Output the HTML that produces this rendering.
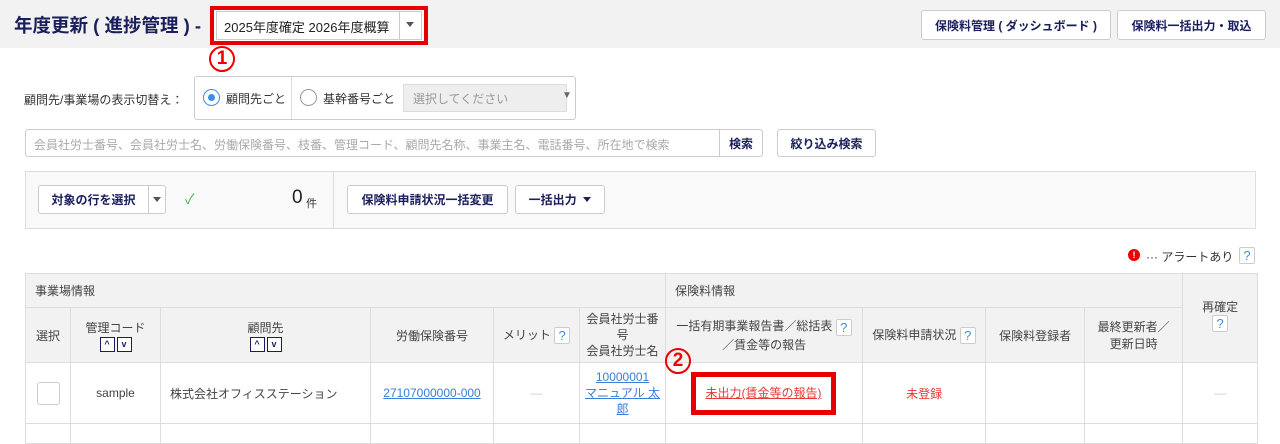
<!DOCTYPE html>
<html><head><meta charset="utf-8"><style>
*{box-sizing:border-box;margin:0;padding:0}
body{width:1280px;height:430px;overflow:hidden;background:#fff;font-family:"Liberation Sans","Noto Sans CJK JP",sans-serif;color:#333;position:relative;font-size:12px}
.a{position:absolute}
.btn{position:absolute;border:1px solid #ccc;border-radius:3px;background:#fff;color:#1a1f5c;font-weight:bold;font-size:12px;display:flex;align-items:center;justify-content:center}
.q{display:inline-block;width:16px;height:17px;border:1px solid #ccc;border-radius:2px;color:#3a8ee6;font-size:13px;line-height:15px;text-align:center;background:#fff;vertical-align:middle}
table{position:absolute;left:25px;top:273px;border-collapse:collapse;width:1232px;font-size:12px;table-layout:fixed}
td,th{border:1px solid #ddd;font-weight:normal;text-align:center;color:#444}
th{background:#f2f2f2}
.sort{display:inline-block;width:15px;height:15px;border:1px solid #1a1f5c;margin:0 1px;font-size:9px;line-height:13px;color:#1a1f5c;font-weight:bold;background:#fff}
.lnk{color:#3a7ed8;text-decoration:underline}
.circ{position:absolute;width:26px;height:26px;border:2px solid #e00;border-radius:50%;color:#e00;font-weight:bold;font-size:19px;text-align:center;line-height:22px}
</style></head><body>
<div class="a" style="left:0;top:0;width:1280px;height:48px;background:#f2f2f2"></div>
<div class="a" style="left:14px;top:12px;font-size:18.5px;font-weight:bold;color:#1a1f5c">年度更新 ( 進捗管理 ) -</div>
<div class="a" style="left:210px;top:6px;width:218px;height:39px;border:4px solid #e60000;background:#fff"></div>
<div class="a" style="left:216px;top:11px;width:206px;height:29px;border:1px solid #ccc;background:#fff"></div>
<div class="a" style="left:224px;top:17px;font-size:13px;color:#222">2025年度確定 2026年度概算</div>
<div class="a" style="left:399px;top:12px;width:1px;height:27px;background:#ccc"></div>
<div class="a" style="left:406px;top:22px;border-left:4px solid transparent;border-right:4px solid transparent;border-top:5px solid #555"></div>
<div class="btn" style="left:921px;top:10px;width:190px;height:30px">保険料管理 ( ダッシュボード )</div>
<div class="btn" style="left:1117px;top:10px;width:149px;height:30px">保険料一括出力・取込</div>
<div class="circ" style="left:209px;top:46px">1</div>

<div class="a" style="left:24px;top:91px;font-size:12px;color:#333">顧問先/事業場の表示切替え：</div>
<div class="a" style="left:194px;top:76px;width:382px;height:44px;border:1px solid #ccc;border-radius:3px"></div>
<div class="a" style="left:291px;top:77px;width:1px;height:42px;background:#ddd"></div>
<div class="a" style="left:203px;top:89px;width:17px;height:17px;border:1px solid #3a8ee6;border-radius:50%"></div>
<div class="a" style="left:208px;top:94px;width:7px;height:7px;background:#3a8ee6;border-radius:50%"></div>
<div class="a" style="left:226px;top:90px;font-size:12px">顧問先ごと</div>
<div class="a" style="left:300px;top:89px;width:17px;height:17px;border:1px solid #999;border-radius:50%"></div>
<div class="a" style="left:323px;top:90px;font-size:12px">基幹番号ごと</div>
<div class="a" style="left:403px;top:84px;width:164px;height:28px;background:#eee;border:1px solid #ddd"></div>
<div class="a" style="left:413px;top:90px;color:#999">選択してください</div>
<div class="a" style="left:562px;top:90px;color:#666;font-size:10px">▼</div>

<div class="a" style="left:25px;top:129px;width:695px;height:28px;border:1px solid #ccc;border-radius:3px 0 0 3px"></div>
<div class="a" style="left:34px;top:136px;color:#aaa">会員社労士番号、会員社労士名、労働保険番号、枝番、管理コード、顧問先名称、事業主名、電話番号、所在地で検索</div>
<div class="btn" style="left:719px;top:129px;width:44px;height:28px;border-radius:0 3px 3px 0">検索</div>
<div class="btn" style="left:777px;top:129px;width:99px;height:28px">絞り込み検索</div>

<div class="a" style="left:25px;top:171px;width:1231px;height:58px;background:#f9f9f9;border:1px solid #ddd"></div>
<div class="a" style="left:333px;top:172px;width:1px;height:56px;background:#ddd"></div>
<div class="btn" style="left:38px;top:185px;width:111px;height:29px;border-radius:3px 0 0 3px">対象の行を選択</div>
<div class="btn" style="left:148px;top:185px;width:18px;height:29px;border-radius:0 3px 3px 0"><span style="border-left:4px solid transparent;border-right:4px solid transparent;border-top:5px solid #555"></span></div>
<div class="a" style="left:185px;top:189px;color:#4caf50;font-size:14px">✓</div>
<div class="a" style="left:292px;top:187px;font-size:19px;color:#222">0</div>
<div class="a" style="left:306px;top:195px;font-size:11px">件</div>
<div class="btn" style="left:347px;top:185px;width:161px;height:29px">保険料申請状況一括変更</div>
<div class="btn" style="left:515px;top:185px;width:90px;height:29px">一括出力&nbsp;&nbsp;<span style="border-left:4px solid transparent;border-right:4px solid transparent;border-top:5px solid #1a1f5c"></span></div>

<div class="a" style="left:1128px;top:249px;width:12px;height:12px;border-radius:50%;background:#e00;color:#fff;font-size:9px;font-weight:bold;text-align:center;line-height:12px">!</div>
<div class="a" style="left:1146px;top:248px;font-size:12px">··· アラートあり</div>
<div class="a" style="left:1239px;top:247px"><span class="q">?</span></div>

<table>
<colgroup><col style="width:45px"><col style="width:90px"><col style="width:210px"><col style="width:123px"><col style="width:86px"><col style="width:86px"><col style="width:197px"><col style="width:123px"><col style="width:99px"><col style="width:98px"><col style="width:75px"></colgroup>
<tr style="height:34px"><th colspan="6" style="text-align:left;padding-left:9px">事業場情報</th><th colspan="4" style="text-align:left;padding-left:9px">保険料情報</th><th rowspan="2" style="vertical-align:top;padding-top:24px">再確定<br><span class="q">?</span></th></tr>
<tr style="height:55px">
<th>選択</th>
<th>管理コード<br><span class="sort">^</span><span class="sort">v</span></th>
<th>顧問先<br><span class="sort">^</span><span class="sort">v</span></th>
<th>労働保険番号</th>
<th>メリット <span class="q">?</span></th>
<th style="line-height:16px">会員社労士番<br>号<br>会員社労士名</th>
<th>一括有期事業報告書／総括表 <span class="q">?</span><br>／賃金等の報告</th>
<th>保険料申請状況 <span class="q">?</span></th>
<th>保険料登録者</th>
<th>最終更新者／<br>更新日時</th>
</tr>
<tr style="height:61px;background:#fff">
<td><span style="display:inline-block;width:23px;height:23px;border:1px solid #ccc;border-radius:3px;vertical-align:middle"></span></td>
<td>sample</td>
<td style="text-align:left;padding-left:9px">株式会社オフィスステーション</td>
<td><span class="lnk">27107000000-000</span></td>
<td style="color:#ccc">—</td>
<td style="line-height:16px"><span class="lnk">10000001<br>マニュアル 太<br>郎</span></td>
<td></td>
<td style="color:#e53935">未登録</td>
<td></td><td></td>
<td style="color:#ccc">—</td>
</tr>
<tr style="height:20px"><td></td><td></td><td></td><td></td><td></td><td></td><td></td><td></td><td></td><td></td><td></td></tr>
</table>
<div class="circ" style="left:665px;top:348px">2</div>
<div class="a" style="left:691px;top:372px;width:145px;height:43px;border:5px solid #e60000;background:#fff;text-align:center;line-height:33px;color:#e53935;text-decoration:underline">未出力(賃金等の報告)</div>
</body></html>
